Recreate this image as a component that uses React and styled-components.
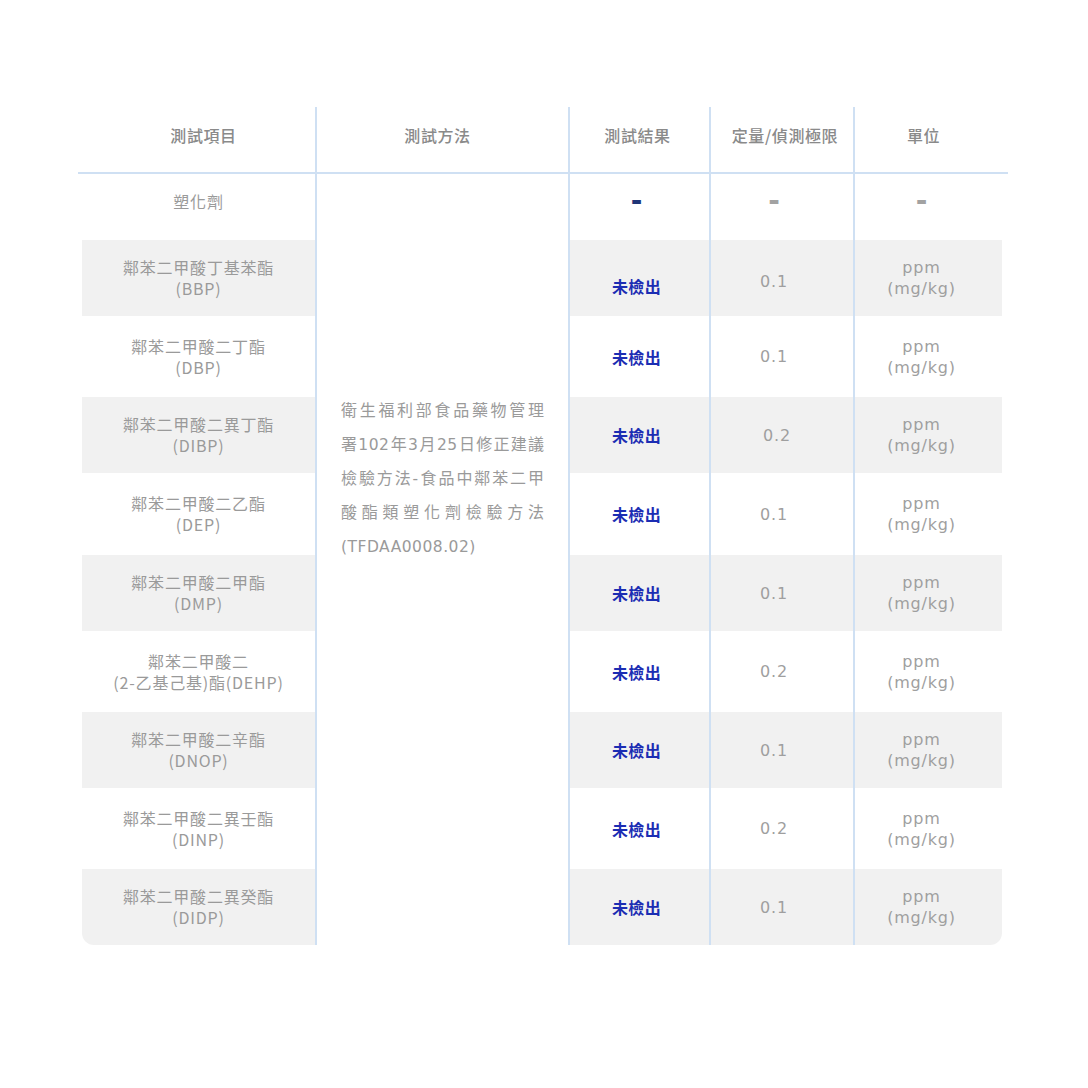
import React from 'react';
import styled, { createGlobalStyle } from 'styled-components';

const GlobalStyle = createGlobalStyle`
  html, body {
    margin: 0;
    padding: 0;
    background: #ffffff;
  }
  body {
    font-family: "Noto Sans CJK TC", "Noto Sans", sans-serif;
  }
`;

const LINE = '#cfe0f3';
const COLS = '233px 255px 139px 144px 149px';

const Page = styled.div`
  width: 1088px;
  min-height: 1088px;
  padding-top: 107px;
  box-sizing: border-box;
`;

const Table = styled.div`
  width: 930px;
  margin-left: 78px;
`;

const HeadRow = styled.div`
  display: grid;
  grid-template-columns: ${COLS};
  height: 67px;
  padding: 0 6px 0 4px;
  border-bottom: 2px solid ${LINE};
  box-sizing: border-box;
`;

const HeadCell = styled.div`
  display: flex;
  align-items: center;
  justify-content: center;
  padding-bottom: 10px;
  padding-left: ${p => (p.$nudge > 0 ? p.$nudge * 2 : 0)}px;
  padding-right: ${p => (p.$nudge < 0 ? -p.$nudge * 2 : 0)}px;
  font-size: 16px;
  font-weight: 500;
  letter-spacing: 0.6px;
  color: #8a8a8a;
  border-left: ${p => (p.$left ? `2px solid ${LINE}` : 'none')};
  border-right: ${p => (p.$right ? `2px solid ${LINE}` : 'none')};
`;

const Body = styled.div`
  display: grid;
  grid-template-columns: ${COLS};
  grid-template-rows: 66px 76px 81px 76px 82px 76px 81px 76px 81px 76px;
  padding: 0 6px 0 4px;
`;

const MethodCell = styled.div`
  grid-column: 2;
  grid-row: 1 / -1;
  border-left: 2px solid ${LINE};
  border-right: 2px solid ${LINE};
  background: #ffffff;
  padding: 218px 24px 0 24px;
  color: #9a9a9a;
`;

const MethodLine = styled.div`
  line-height: 34px;
  height: 34px;
  text-align: justify;
  text-align-last: ${p => (p.$fill ? 'justify' : 'left')};
  white-space: nowrap;
  font-family: "Noto Sans CJK TC", sans-serif;
  font-size: 16px;

  span {
    font-family: "DejaVu Sans", sans-serif;
    font-size: 15.5px;
    letter-spacing: 0.5px;
  }
`;

const Cell = styled.div`
  display: flex;
  flex-direction: column;
  align-items: center;
  justify-content: center;
  text-align: center;
  background: ${p => (p.$shade ? '#f1f1f1' : '#ffffff')};
  border-left: ${p => (p.$line ? `2px solid ${LINE}` : 'none')};
  border-bottom-left-radius: ${p => (p.$roundLeft ? '12px' : '0')};
  border-bottom-right-radius: ${p => (p.$roundRight ? '12px' : '0')};
  padding-top: ${p => p.$shift || 0}px;
  padding-bottom: ${p => p.$lift || 0}px;
  padding-right: ${p => p.$pull || 0}px;
`;

const ItemText = styled.div`
  font-size: 16px;
  line-height: 21px;
  letter-spacing: 0.8px;
  color: #9a9a9a;
`;

const Result = styled.div`
  font-size: 16px;
  font-weight: 700;
  letter-spacing: 0.4px;
  color: #1b2db3;
`;

const Value = styled.div`
  font-family: "DejaVu Sans", sans-serif;
  font-size: 16px;
  line-height: 21px;
  letter-spacing: 0.8px;
  color: #9f9f9f;
  padding-left: ${p => p.$indent || 0}px;
`;

const Dash = styled.div`
  font-family: "DejaVu Sans", sans-serif;
  font-size: 28px;
  font-weight: 700;
  line-height: 22px;
  color: ${p => (p.$dark ? '#1f3577' : '#a2a2a2')};
`;

const rows = [
  { name: '鄰苯二甲酸丁基苯酯', code: '(BBP)', limit: '0.1' },
  { name: '鄰苯二甲酸二丁酯', code: '(DBP)', limit: '0.1' },
  { name: '鄰苯二甲酸二異丁酯', code: '(DIBP)', limit: '0.2' },
  { name: '鄰苯二甲酸二乙酯', code: '(DEP)', limit: '0.1' },
  { name: '鄰苯二甲酸二甲酯', code: '(DMP)', limit: '0.1' },
  { name: '鄰苯二甲酸二', code: '(2-乙基己基)酯(DEHP)', limit: '0.2' },
  { name: '鄰苯二甲酸二辛酯', code: '(DNOP)', limit: '0.1' },
  { name: '鄰苯二甲酸二異壬酯', code: '(DINP)', limit: '0.2' },
  { name: '鄰苯二甲酸二異癸酯', code: '(DIDP)', limit: '0.1' },
];

function App() {
  return (
    <Page>
      <GlobalStyle />
      <Table>
        <HeadRow>
          <HeadCell $nudge={5}>測試項目</HeadCell>
          <HeadCell $left $right $nudge={-5}>測試方法</HeadCell>
          <HeadCell $nudge={-2}>測試結果</HeadCell>
          <HeadCell $left $nudge={3}>定量/偵測極限</HeadCell>
          <HeadCell $left $nudge={-5}>單位</HeadCell>
        </HeadRow>

        <Body>
          <MethodCell>
            <MethodLine $fill>衛生福利部食品藥物管理</MethodLine>
            <MethodLine $fill>署<span>102</span>年<span>3</span>月<span>25</span>日修正建議</MethodLine>
            <MethodLine $fill>檢驗方法<span>-</span>食品中鄰苯二甲</MethodLine>
            <MethodLine $fill>酸酯類塑化劑檢驗方法</MethodLine>
            <MethodLine><span>(TFDAA0008.02)</span></MethodLine>
          </MethodCell>

          <Cell $lift={12}><ItemText>塑化劑</ItemText></Cell>
          <Cell $lift={12} $pull={6}><Dash $dark>-</Dash></Cell>
          <Cell $lift={12} $line $pull={16}><Dash>-</Dash></Cell>
          <Cell $lift={12} $line $pull={14}><Dash>-</Dash></Cell>

          {rows.map((r, i) => {
            const shade = i % 2 === 0;
            const last = i === rows.length - 1;
            return (
              <React.Fragment key={r.code}>
                <Cell $shade={shade} $roundLeft={last}>
                  <ItemText>{r.name}</ItemText>
                  <ItemText>{r.code}</ItemText>
                </Cell>
                <Cell $shade={shade} $pull={6} $shift={i === 0 ? 16 : 0}>
                  <Result>未檢出</Result>
                </Cell>
                <Cell $shade={shade} $line $pull={16} $shift={i === 0 ? 6 : 0}>
                  <Value $indent={r.code === '(DIBP)' ? 6 : 0}>{r.limit}</Value>
                </Cell>
                <Cell $shade={shade} $line $pull={14} $roundRight={last}>
                  <Value>ppm</Value>
                  <Value>(mg/kg)</Value>
                </Cell>
              </React.Fragment>
            );
          })}
        </Body>
      </Table>
    </Page>
  );
}

export default App;
